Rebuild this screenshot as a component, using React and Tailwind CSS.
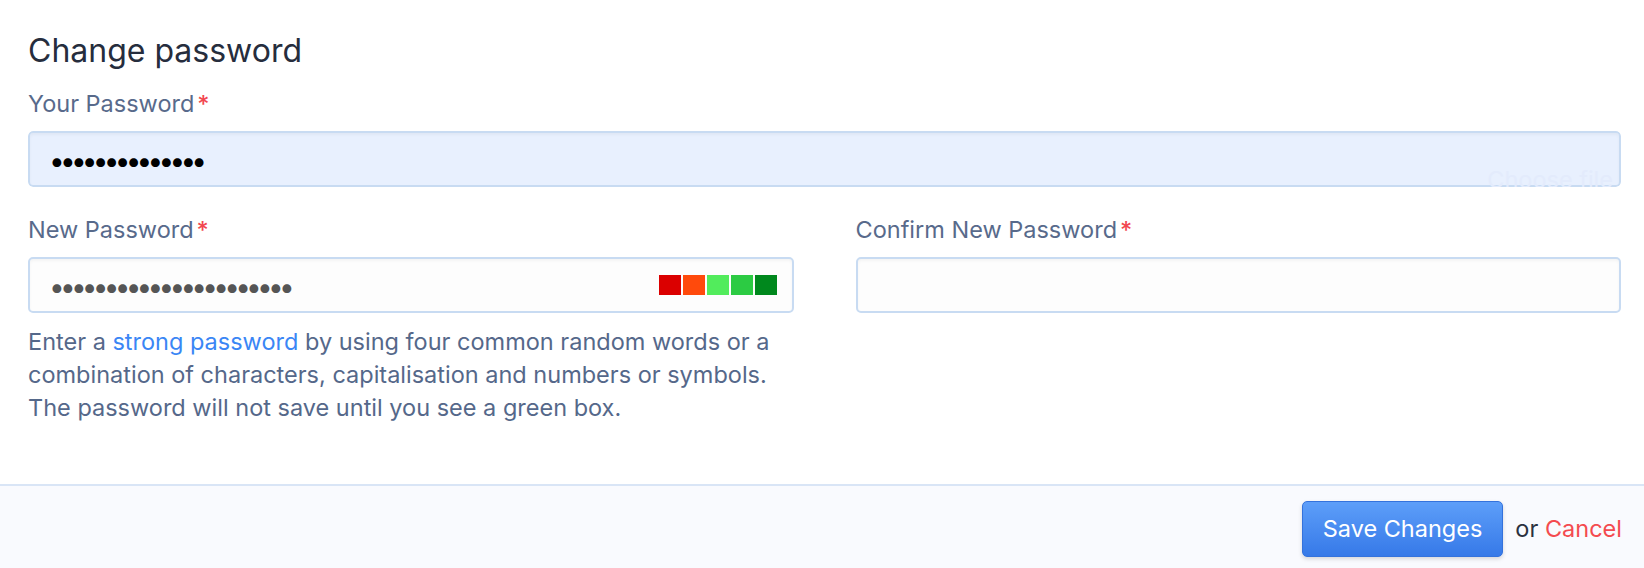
import React from "react";

const font = "font-['Inter','Noto_Sans',sans-serif]";

function Label({ children }) {
  return (
    <label className="block text-[23.5px] leading-[30px] text-[#586a8b]">
      {children}
      <span className="ml-[3px] font-medium text-[#f2474f]">*</span>
    </label>
  );
}

const inputBase =
  "block w-full h-[56px] rounded-[5px] border-2 border-[#c8dbf2] pl-[19px] pr-[16px] pt-[3px] text-[28px] tracking-[-4.8px] outline-none shadow-[inset_0_2px_3px_rgba(0,0,0,0.04)]";

const strength = ["bg-[#db0000]", "bg-[#ff4a0c]", "bg-[#52ec5c]", "bg-[#2ccb43]", "bg-[#00881d]"];

export default function App() {
  return (
    <div className={`w-[1644px] h-[568px] overflow-hidden bg-white ${font}`}>
      <div className="pl-[28px] pr-[23px] pt-[31px] pb-[60px]">
        <h2 className="text-[32px] leading-[40px] text-[#262d3d]">Change password</h2>

        <div className="mt-[18px]">
          <Label>Your Password</Label>
          <div className="relative mt-[12px] overflow-hidden rounded-[5px]">
            <input
              type="password"
              readOnly
              value="hunter2hunter2"
              className={`${inputBase} bg-[#e8f0fe] text-black`}
            />
            <span className="pointer-events-none absolute right-[8px] top-[34px] text-[23.5px] leading-[30px] text-[#e3ebfc]">
              Choose file
            </span>
          </div>
        </div>

        <div className="mt-[28px] grid grid-cols-2 gap-x-[62px]">
          <div>
            <Label>New Password</Label>
            <div className="relative mt-[12px]">
              <input
                type="password"
                readOnly
                value="correcthorsebatterysta"
                className={`${inputBase} bg-[#fdfdfd] text-[#555]`}
              />
              <div className="absolute right-[17px] top-1/2 -translate-y-1/2 flex gap-[2px]">
                {strength.map((c) => (
                  <span key={c} className={`block w-[22px] h-[20px] ${c}`} />
                ))}
              </div>
            </div>
            <p className="mt-[12px] text-[23.5px] leading-[33px] text-[#55688a]">
              Enter a <a className="text-[#3a86f5]">strong password</a> by using four common random words or a
              combination of characters, capitalisation and numbers or symbols. The password will not save until
              you see a green box.
            </p>
          </div>
          <div>
            <Label>Confirm New Password</Label>
            <div className="mt-[12px]">
              <input type="password" readOnly value="" className={`${inputBase} bg-[#fdfdfd]`} />
            </div>
          </div>
        </div>
      </div>

      <div className="border-t-2 border-[#d9e5f6] bg-[#f9fafe] h-[100px] pt-[15px] pr-[22px] flex justify-end items-start">
        <button className="h-[56px] px-[20px] rounded-[5px] border border-[#3472dc] bg-gradient-to-b from-[#5d9ef9] to-[#3679e8] text-white text-[23.5px] shadow-[0_2px_4px_rgba(0,0,0,0.15)]">
          Save Changes
        </button>
        <span className="ml-[12px] h-[56px] flex items-center text-[23.5px] text-[#2b3140]">
          or&nbsp;<a className="text-[#f44a4f]">Cancel</a>
        </span>
      </div>
    </div>
  );
}
